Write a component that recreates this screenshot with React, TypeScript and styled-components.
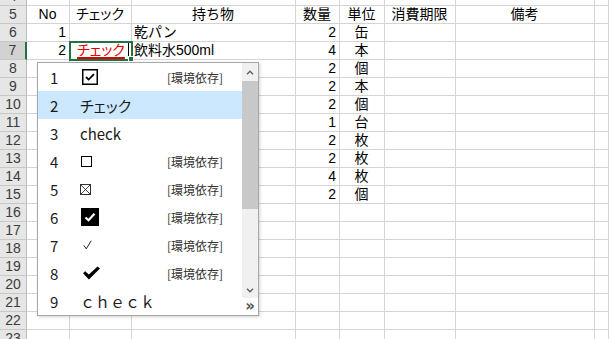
import React from 'react';
import styled, { createGlobalStyle } from 'styled-components';

const Global = createGlobalStyle`
  html, body { margin: 0; padding: 0; background: #fff; overflow: hidden; }
  body { font-family: "Liberation Sans", "Noto Sans CJK JP", sans-serif; }
`;

const COLS = '27px 43px 62px 164px 44px 45px 71px 139px 1fr';

const Page = styled.div`
  position: relative;
  width: 609px;
  height: 339px;
  overflow: hidden;
  background: #fff;
`;

const Sheet = styled.div`
  display: grid;
  grid-template-columns: ${COLS};
  grid-auto-rows: 18px;
  margin-top: -12px;
`;

type Align = 'left' | 'center' | 'right';

const Cell = styled.div<{ $align?: Align; $selected?: boolean }>`
  position: relative;
  box-sizing: border-box;
  border-right: 1px solid #d4d4d4;
  border-bottom: 1px solid #d4d4d4;
  font-family: "Liberation Sans", "Noto Sans CJK JP", sans-serif;
  font-size: 14px;
  line-height: 17px;
  color: #000;
  text-align: ${(p) => p.$align ?? 'left'};
  padding: 0 3px 0 2px;
  white-space: nowrap;
  ${(p) =>
    p.$selected &&
    `
    outline: 2px solid #217346;
    outline-offset: -1px;
    z-index: 2;
    &::after {
      content: '';
      position: absolute;
      right: -3px;
      bottom: -3px;
      width: 4px;
      height: 4px;
      background: #217346;
      border: 1px solid #fff;
    }
  `}
`;

const Prop = styled.span`
  font-feature-settings: "palt";
`;

const RowHead = styled.div<{ $active?: boolean }>`
  box-sizing: border-box;
  background: ${(p) => (p.$active ? '#d2d2d2' : '#e6e6e6')};
  border-right: ${(p) => (p.$active ? '2px solid #217346' : '1px solid #bcbcbc')};
  border-bottom: 1px solid #c8c8c8;
  font-family: "Liberation Sans", sans-serif;
  font-size: 14px;
  line-height: 17px;
  color: #3c3c3c;
  text-align: center;
`;

const Editing = styled.span`
  color: #e00000;
  font-feature-settings: "palt";
  text-decoration: underline;
  text-decoration-color: #e00000;
  text-decoration-thickness: 2px;
  text-underline-offset: 2px;
  margin-left: 5px;
`;

const Caret = styled.span`
  display: inline-block;
  width: 1px;
  height: 14px;
  background: #000;
  vertical-align: -2px;
  margin-left: 3px;
`;

/* ---------- candidate window ---------- */

const Popup = styled.div`
  position: absolute;
  left: 37px;
  top: 62px;
  width: 222px;
  height: 254px;
  box-sizing: border-box;
  border: 1px solid #a8a8a8;
  background: #fff;
  box-shadow: 1px 1px 3px rgba(0, 0, 0, 0.18);
  display: flex;
  z-index: 5;
  font-family: "Noto Sans CJK JP", "Noto Sans", sans-serif;
`;

const List = styled.div`
  flex: 1;
  display: flex;
  flex-direction: column;
`;

const Item = styled.div<{ $active?: boolean }>`
  height: 28px;
  display: flex;
  align-items: center;
  background: ${(p) => (p.$active ? '#cce8ff' : 'transparent')};
  color: #1a1a1a;
  font-size: 15px;
`;

const Num = styled.span`
  width: 42px;
  padding-left: 12px;
  box-sizing: border-box;
  font-size: 15px;
`;

const Content = styled.span<{ $plain?: boolean }>`
  flex: 1;
  display: flex;
  align-items: center;
  font-feature-settings: ${(p) => (p.$plain ? 'normal' : '"palt"')};
`;

const Note = styled.span`
  font-size: 12px;
  color: #333;
  margin-right: 19px;
`;

const Scroll = styled.div`
  width: 16px;
  display: flex;
  flex-direction: column;
`;

const Arrow = styled.div<{ $h: number }>`
  height: ${(p) => p.$h}px;
  background: #f0f0f0;
  display: flex;
  align-items: center;
  justify-content: center;
`;

const Track = styled.div`
  flex: 1;
  background: #f0f0f0;
`;

const Thumb = styled.div`
  height: 128px;
  background: #c8c8c8;
`;

const More = styled.div`
  height: 17px;
  display: flex;
  align-items: center;
  justify-content: center;
  font-family: "DejaVu Sans", sans-serif;
  font-size: 15px;
  line-height: 15px;
  font-weight: bold;
  color: #505050;
`;

const Chevron = ({ up }: { up?: boolean }) => (
  <svg width="8" height="5" viewBox="0 0 8 5">
    <path
      d={up ? 'M1 4.2 L4 1.2 L7 4.2' : 'M1 0.8 L4 3.8 L7 0.8'}
      fill="none"
      stroke="#606060"
      strokeWidth="1.4"
    />
  </svg>
);

const BoxCheck = () => (
  <svg width="16" height="16" viewBox="0 0 16 16" style={{ marginLeft: 2 }}>
    <rect x="0.75" y="0.75" width="14.5" height="14.5" fill="none" stroke="#000" strokeWidth="1.5" />
    <path d="M4 8 L6.6 10.6 L12 5.2" fill="none" stroke="#000" strokeWidth="1.8" />
  </svg>
);

const EmptyBox = () => (
  <svg width="11" height="11" viewBox="0 0 11 11" style={{ marginLeft: 1 }}>
    <rect x="0.5" y="0.5" width="10" height="10" fill="none" stroke="#000" strokeWidth="1" />
  </svg>
);

const XBox = () => (
  <svg width="11" height="11" viewBox="0 0 11 11">
    <rect x="0.5" y="0.5" width="10" height="10" fill="none" stroke="#333" strokeWidth="1" />
    <path d="M1 1 L10 10 M10 1 L1 10" stroke="#333" strokeWidth="0.9" />
  </svg>
);

const BlackCheck = () => (
  <svg width="18" height="18" viewBox="0 0 18 18" style={{ marginLeft: 1 }}>
    <rect x="0" y="0" width="18" height="18" fill="#000" />
    <path d="M4.5 9.5 L7.5 12.3 L13.5 5.8" fill="none" stroke="#fff" strokeWidth="2.2" />
  </svg>
);

const ThinCheck = () => (
  <svg width="9" height="10" viewBox="0 0 9 10" style={{ marginLeft: 3 }}>
    <path d="M0.8 5.4 L3.3 8.8 L8.2 0.8" fill="none" stroke="#222" strokeWidth="1" />
  </svg>
);

const HeavyCheck = () => (
  <svg width="19" height="14" viewBox="0 0 19 14" style={{ marginLeft: 2 }}>
    <path d="M1 7.2 L3.2 5.2 L6.8 8.6 L15.6 0.5 L18 2.6 L6.9 13.4 Z" fill="#000" />
  </svg>
);

type Row = { n: number; no?: string; item?: string; qty?: string; unit?: string; sel?: boolean; head?: boolean };

const rows: Row[] = [
  { n: 4 },
  { n: 5, head: true },
  { n: 6, no: '1', item: '乾パン', qty: '2', unit: '缶' },
  { n: 7, no: '2', item: '飲料水500ml', qty: '4', unit: '本', sel: true },
  { n: 8, qty: '2', unit: '個' },
  { n: 9, qty: '2', unit: '本' },
  { n: 10, qty: '2', unit: '個' },
  { n: 11, qty: '1', unit: '台' },
  { n: 12, qty: '2', unit: '枚' },
  { n: 13, qty: '2', unit: '枚' },
  { n: 14, qty: '4', unit: '枚' },
  { n: 15, qty: '2', unit: '個' },
  ...Array.from({ length: 8 }, (_, i) => ({ n: 16 + i })),
];

const candidates: { icon: React.ReactNode; note?: boolean; plain?: boolean }[] = [
  { icon: <BoxCheck />, note: true },
  { icon: 'チェック' },
  { icon: 'check' },
  { icon: <EmptyBox />, note: true },
  { icon: <XBox />, note: true },
  { icon: <BlackCheck />, note: true },
  { icon: <ThinCheck />, note: true },
  { icon: <HeavyCheck />, note: true },
  { icon: 'ｃｈｅｃｋ', plain: true },
];

export default function App() {
  return (
    <Page>
      <Global />
      <Sheet>
        {rows.map((r) => (
          <React.Fragment key={r.n}>
            <RowHead $active={r.sel}>{r.n}</RowHead>
            {r.head ? (
              <>
                <Cell $align="center">No</Cell>
                <Cell $align="center">
                  <Prop>チェック</Prop>
                </Cell>
                <Cell $align="center">持ち物</Cell>
                <Cell $align="center">数量</Cell>
                <Cell $align="center">単位</Cell>
                <Cell $align="center">消費期限</Cell>
                <Cell $align="center">備考</Cell>
                <Cell />
              </>
            ) : (
              <>
                <Cell $align="right">{r.no}</Cell>
                <Cell $selected={r.sel}>
                  {r.sel && (
                    <>
                      <Editing>チェック</Editing>
                      <Caret />
                    </>
                  )}
                </Cell>
                <Cell>{r.item}</Cell>
                <Cell $align="right">{r.qty}</Cell>
                <Cell $align="center">{r.unit}</Cell>
                <Cell />
                <Cell />
                <Cell />
              </>
            )}
          </React.Fragment>
        ))}
      </Sheet>
      <Popup>
        <List>
          {candidates.map((c, i) => (
            <Item key={i} $active={i === 1}>
              <Num>{i + 1}</Num>
              <Content $plain={c.plain}>{c.icon}</Content>
              {c.note && <Note>[環境依存]</Note>}
            </Item>
          ))}
        </List>
        <Scroll>
          <Arrow $h={18}>
            <Chevron up />
          </Arrow>
          <Track>
            <Thumb />
          </Track>
          <Arrow $h={15}>
            <Chevron />
          </Arrow>
          <More>»</More>
        </Scroll>
      </Popup>
    </Page>
  );
}
